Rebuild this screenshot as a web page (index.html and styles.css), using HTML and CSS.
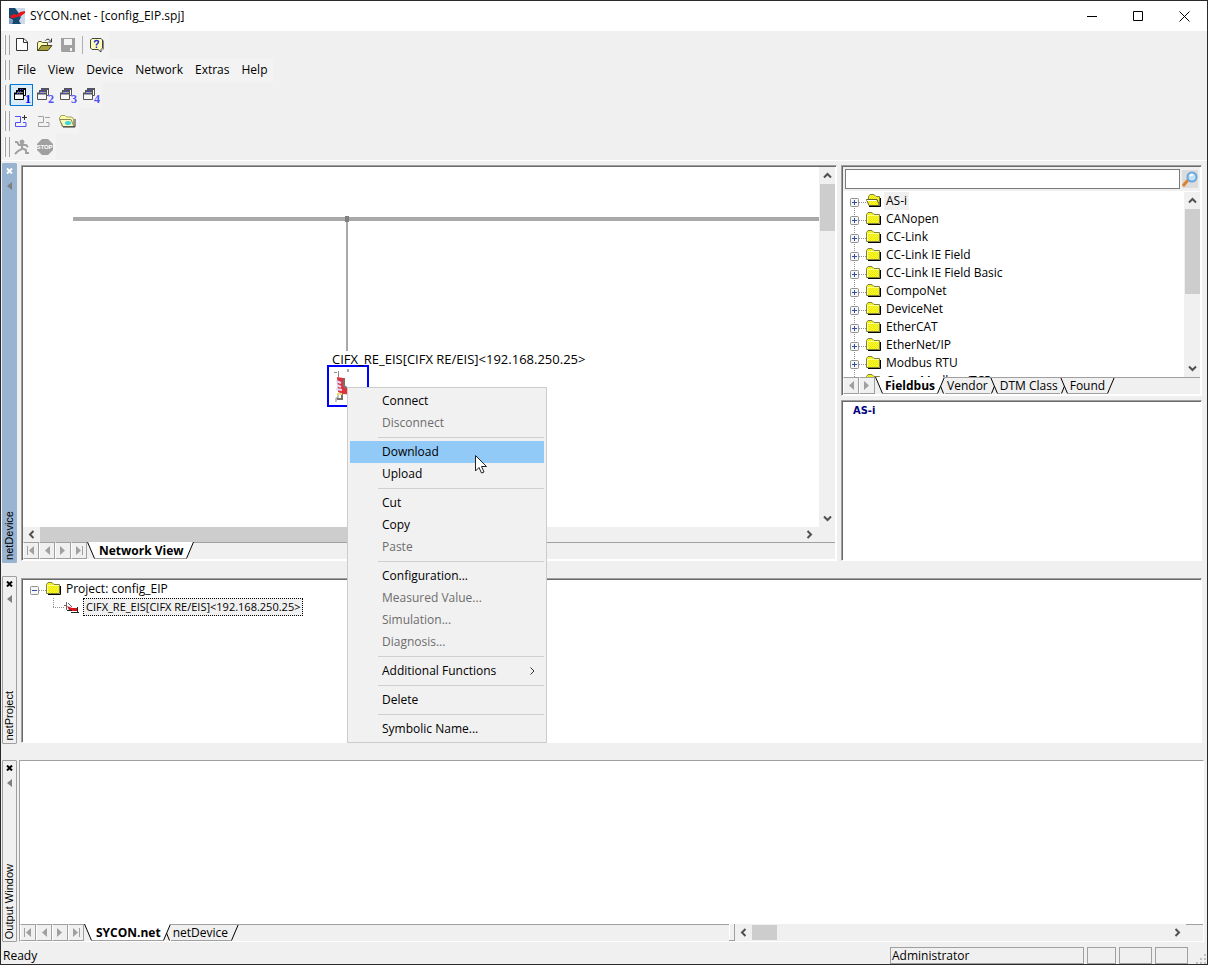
FILE: index.html
```html
<!DOCTYPE html>
<html lang="en">
<head>
<meta charset="utf-8">
<title>SYCON.net - [config_EIP.spj]</title>
<link rel="stylesheet" href="styles.css">
</head>
<body>
<svg class="defs" width="0" height="0" aria-hidden="true">
  <defs>
    <pattern id="dither" width="2" height="2" patternUnits="userSpaceOnUse">
      <rect width="2" height="2" fill="#ffff00"/><rect width="1" height="1" fill="#e6e23c"/><rect x="1" y="1" width="1" height="1" fill="#e6e23c"/>
    </pattern>
    <symbol id="folder" viewBox="0 0 16 14">
      <path d="M2 12.500h12.500V4" fill="none" stroke="#000"/>
      <path d="M.5 11.500V2.500L2 .5H6L8 2.500H13.500V11.500Z" fill="url(#dither)" stroke="#808040"/>
      <path d="M1.500 11V3.500H13" fill="none" stroke="#ffff90"/>
    </symbol>
    <symbol id="folder-open" viewBox="0 0 16 14">
      <path d="M3 12.500h11.500V4" fill="none" stroke="#000"/>
      <path d="M2.500 6V2.500L4 .5H8L10 2.500H13.500V11.500" fill="url(#dither)" stroke="#808040"/>
      <path d="M.5 5.500H11L13.500 11.500H3Z" fill="url(#dither)" stroke="#606030"/>
      <path d="M1 6.500H10" stroke="#fff"/>
    </symbol>
    <symbol id="plus" viewBox="0 0 9 9">
      <rect x=".5" y=".5" width="8" height="8" rx="1" fill="#f6f6f6" stroke="#919191"/>
      <path d="M2 4.500H7M4.500 2V7" stroke="#2f4fa8"/>
    </symbol>
    <symbol id="minus" viewBox="0 0 9 9">
      <rect x=".5" y=".5" width="8" height="8" rx="1" fill="#f6f6f6" stroke="#919191"/>
      <path d="M2 4.500H7" stroke="#2f4fa8"/>
    </symbol>
    <symbol id="first" viewBox="0 0 10 9"><path d="M1.500 0V9" stroke="#a0a0a0"/><path d="M8 0V9L3 4.500Z" fill="#a0a0a0"/></symbol>
    <symbol id="prev" viewBox="0 0 10 9"><path d="M8 0V9L3 4.500Z" fill="#a0a0a0"/></symbol>
    <symbol id="next" viewBox="0 0 10 9"><path d="M2 0V9L7 4.500Z" fill="#a0a0a0"/></symbol>
    <symbol id="last" viewBox="0 0 10 9"><path d="M8.500 0V9" stroke="#a0a0a0"/><path d="M2 0V9L7 4.500Z" fill="#a0a0a0"/></symbol>
    <symbol id="windows" viewBox="0 0 13 12">
      <path d="M4.500 1.500H11.500V7.500H4.500Z" fill="#f8f8f8" stroke="currentColor"/>
      <path d="M4 1H12" stroke="currentColor" stroke-width="2"/>
      <path d="M2.500 3.500H9.500V9.500H2.500Z" fill="#f8f8f8" stroke="currentColor"/>
      <path d="M2 3H10" stroke="currentColor" stroke-width="2"/>
      <path d="M.5 5.500H9.500V11.500H.5Z" fill="#f8f8f8" stroke="currentColor"/>
      <path d="M0 5.500H10" stroke="currentColor" stroke-width="2"/>
      <path d="M6 1.500h1M8 1.500h1M4 3.500h1M6 3.500h1M3 5.500h1M5 5.500h1" stroke="#44f"/>
    </symbol>
    <symbol id="close-x" viewBox="0 0 7 6"><path d="M1 .5L6 5.500M6 .5L1 5.500" stroke="currentColor" stroke-width="2"/></symbol>
    <symbol id="tri" viewBox="0 0 5 8"><path d="M5 0V8L0 4Z" fill="#808080"/></symbol>
    <symbol id="up" viewBox="0 0 9 7"><path d="M1 5.500L4.500 2L8 5.500" fill="none" stroke="#505050" stroke-width="2"/></symbol>
    <symbol id="down" viewBox="0 0 9 7"><path d="M1 1.500L4.500 5L8 1.500" fill="none" stroke="#505050" stroke-width="2"/></symbol>
    <symbol id="left" viewBox="0 0 7 9"><path d="M5.500 1L2 4.500L5.500 8" fill="none" stroke="#505050" stroke-width="2"/></symbol>
    <symbol id="right" viewBox="0 0 7 9"><path d="M1.500 1L5 4.500L1.500 8" fill="none" stroke="#505050" stroke-width="2"/></symbol>
    <symbol id="edge-open" viewBox="0 0 8 17"><path d="M0 0H8V16H7Z" fill="#fff"/><path d="M.5 0L7.500 16.500" stroke="#000"/></symbol>
    <symbol id="edge-close" viewBox="0 0 8 17"><path d="M0 0H8L1 16H0Z" fill="#fff"/><path d="M7.500 0L.5 16.500" stroke="#000"/></symbol>
    <symbol id="edge-close-next" viewBox="0 0 8 17"><path d="M0 0H8L1 16H0Z" fill="#fff"/><path d="M7.500 0L.5 16.500M3.500 9L6.500 16.500" stroke="#000"/><path d="M7 .5H8" stroke="#a0a0a0"/></symbol>
    <symbol id="edge-mid" viewBox="0 0 8 17"><path d="M.5 0L7.500 16.500M4.500 9L1.500 16.500" stroke="#000"/><path d="M0 .5H8" stroke="#a0a0a0"/></symbol>
    <symbol id="edge-end" viewBox="0 0 8 17"><path d="M7.500 0L.5 16.500" stroke="#000"/><path d="M0 .5H8" stroke="#a0a0a0"/></symbol>
  </defs>
</svg>

<div class="window">
  <header class="titlebar">
    <svg class="logo" width="16" height="16" viewBox="0 0 16 16">
      <rect width="16" height="16" fill="#cdd9ea"/>
      <path d="M0 0H6L9 4L12 9L10 13L12 16H3L4 12L0 10Z" fill="#17496f"/>
      <path d="M0 11L4 12L3 16H0Z" fill="#7d9cbd"/>
      <path d="M1 8L5 6L8 7L11 4L16 3V5L12 8L8 9L5 10L2 10Z" fill="#e8141c"/>
    </svg>
    <h1 class="title">SYCON.net - [config_EIP.spj]</h1>
    <div class="controls">
      <button class="control" aria-label="Minimize"><svg width="11" height="11"><path d="M0 5.500H10" stroke="#000"/></svg></button>
      <button class="control" aria-label="Maximize"><svg width="11" height="11"><path d="M.5 .5H9.500V9.500H.5Z" fill="none" stroke="#000"/></svg></button>
      <button class="control" aria-label="Close"><svg width="11" height="11"><path d="M.5 .5L10.500 10.500M10.500 .5L.5 10.500" stroke="#000"/></svg></button>
    </div>
  </header>

  <div class="bars">
    <div class="bar"><div class="band">
      <span class="grip"></span>
      <button class="tool" aria-label="New"><svg width="12" height="14"><path d="M.5 .5H8L11.500 4V12.500H.5Z" fill="#fff" stroke="#333"/><path d="M7.500 .5V4.500H11" fill="none" stroke="#333"/></svg></button>
      <button class="tool" aria-label="Open"><svg width="16" height="14"><path d="M.5 13V4.500L2 3.500H4L5.500 4.500H10.500V7" fill="#ffffb0" stroke="#55553a"/><path d="M1 12.500L4.500 7.500H15L11 12.500Z" fill="#a8a03c" stroke="#44441f"/><path d="M8.500 2.500Q11 -.5 13.500 3M14.500 .5V4H11.500" fill="none" stroke="#333"/></svg></button>
      <button class="tool" aria-label="Save" disabled><svg width="14" height="14"><path d="M0 0H14V14H1L0 13Z" fill="#a0a0a0"/><path d="M3 1H11V7H3ZM9 10H11V13H9Z" fill="#f4f4f4"/></svg></button>
      <span class="divider"></span>
      <button class="tool" aria-label="Help"><svg width="15" height="15"><path d="M2 .5H11L12.500 2V10L11 11.500V14L8 11.500H2L.5 10V2Z" fill="#ffffb8" stroke="#444"/><path d="M13.500 2.500V11L12 12.500" fill="none" stroke="#888"/><path d="M4.500 4.500Q4.500 2.500 6.500 2.500Q8.500 2.500 8.500 4Q8.500 5 6.500 6.500V7.500M6.500 8.500V10" fill="none" stroke="#3434d0" stroke-width="1.500"/></svg></button>
    </div></div>
    <div class="bar menu-bar"><nav class="band">
      <span class="grip menu-grip"></span>
      <button class="menu">File</button><button class="menu">View</button><button class="menu">Device</button><button class="menu">Network</button><button class="menu">Extras</button><button class="menu">Help</button>
    </nav></div>
    <div class="bar"><div class="band">
      <span class="grip"></span>
      <button class="tool numbered selected" aria-label="Layout 1"><svg width="13" height="12"><use href="#windows"/></svg><span class="num">1</span></button>
      <button class="tool numbered" aria-label="Layout 2"><svg width="13" height="12"><use href="#windows"/></svg><span class="num">2</span></button>
      <button class="tool numbered" aria-label="Layout 3"><svg width="13" height="12"><use href="#windows"/></svg><span class="num">3</span></button>
      <button class="tool numbered" aria-label="Layout 4"><svg width="13" height="12"><use href="#windows"/></svg><span class="num">4</span></button>
    </div></div>
    <div class="bar"><div class="band">
      <span class="grip"></span>
      <button class="tool" aria-label="Add"><svg width="13" height="13"><path d="M0 1.500H5.500V7.500H.5V11.500H11V7.500H8" fill="none" stroke="#5050ff"/><path d="M7 2.500H12M9.500 0V5" stroke="#333"/></svg></button>
      <button class="tool" aria-label="Remove" disabled><svg width="13" height="13"><path d="M0 1.500H5.500V7.500H.5V11.500H11V7.500H8M7 2.500H12" fill="none" stroke="#a0a0a0"/></svg></button>
      <button class="tool" aria-label="Catalog"><svg width="17" height="14"><path d="M.5 4L2 1.500H6L7.500 3H13L14.500 5V12.500H3Z" fill="#ffffa0" stroke="#a0a070"/><path d="M.5 5.500H12L15 12.500H4Z" fill="#f8f8b8" stroke="#888860"/><ellipse cx="9" cy="9" rx="3" ry="2" fill="#38d8d8"/><path d="M4 13H16V5" fill="none" stroke="#333"/></svg></button>
    </div></div>
    <div class="bar"><div class="band">
      <span class="grip"></span>
      <button class="tool" aria-label="Run" disabled><svg width="16" height="16"><circle cx="8" cy="3" r="2" fill="#a0a0a0" stroke="#a0a0a0"/><path d="M1 3H3L5 6H12L14 8M8 5V10L4 12L1 15M8 9L12 11V14H15" fill="none" stroke="#a0a0a0" stroke-width="2"/></svg></button>
      <button class="tool stop" aria-label="Stop" disabled><svg width="16" height="16"><path d="M5 0H11L16 5V11L11 16H5L0 11V5Z" fill="#a0a0a0"/></svg><span class="stop-text">STOP</span></button>
    </div></div>
  </div>

  <main class="work">
    <section class="row row-device">
      <div class="dock active"><button class="dock-btn" aria-label="Close netDevice"><svg width="7" height="6"><use href="#close-x"/></svg></button><button class="dock-btn" aria-label="Collapse netDevice"><svg width="5" height="8"><use href="#tri"/></svg></button><span class="dock-label">netDevice</span></div>
      <div class="panel network">
        <div class="view">
          <div class="canvas">
            <div class="bus"></div><div class="drop"></div><div class="joint"></div>
            <div class="node"><svg width="34" height="34"><path d="M3 3.500H6M7.500 2V8M7 24V29H5V33" fill="none" stroke="#888"/><path d="M17 0V3" stroke="#a9a9a9" stroke-width="2"/><path d="M6 8L12 9V15L14 19L24 18V26L12 25L7 23Z" fill="#e0323c"/><path d="M13 9V17L16 19M11 24V30H6" fill="none" stroke="#77706c" stroke-width="2"/><path d="M5 12L10 14M6 16L10 18M5 20L11 21" stroke="#dcdcff" stroke-width="2"/><path d="M6 25H11" stroke="#eedc70" stroke-width="2"/></svg></div>
            <div class="node-label">CIFX_RE_EIS[CIFX RE/EIS]&lt;192.168.250.25&gt;</div>
          </div>
          <div class="vscroll"><svg width="9" height="7"><use href="#up"/></svg><span class="thumb short"></span><svg class="end" width="9" height="7"><use href="#down"/></svg></div>
        </div>
        <div class="hscroll"><svg width="7" height="9"><use href="#left"/></svg><span class="thumb long"></span><svg class="end" width="7" height="9"><use href="#right"/></svg></div>
        <div class="tabs">
          <button class="nav" aria-label="First"><svg width="10" height="9"><use href="#first"/></svg></button><button class="nav" aria-label="Previous"><svg width="10" height="9"><use href="#prev"/></svg></button><button class="nav" aria-label="Next"><svg width="10" height="9"><use href="#next"/></svg></button><button class="nav" aria-label="Last"><svg width="10" height="9"><use href="#last"/></svg></button>
          <svg width="8" height="17"><use href="#edge-open"/></svg><button class="tab on">Network View</button><svg width="8" height="17"><use href="#edge-close"/></svg><span class="fill"></span>
        </div>
      </div>
      <aside class="side">
        <div class="panel catalog">
          <form class="search"><input class="search-box" type="text" aria-label="Search"><button class="search-btn" type="button" aria-label="Find"><svg width="16" height="16"><path d="M1 15L6 9" stroke="#d98333" stroke-width="3"/><circle cx="10" cy="6" r="4.500" fill="#bfe4fa" stroke="#6ca4dc" stroke-width="2"/><path d="M8 5Q9 3 11 4" fill="none" stroke="#fff" stroke-width="2"/></svg></button></form>
          <div class="listing">
            <ul class="tree">
              <li class="item"><svg width="9" height="9"><use href="#plus"/></svg><svg class="fold" width="16" height="14"><use href="#folder-open"/></svg><span class="name picked">AS-i</span></li>
              <li class="item"><svg width="9" height="9"><use href="#plus"/></svg><svg class="fold" width="16" height="14"><use href="#folder"/></svg><span class="name">CANopen</span></li>
              <li class="item"><svg width="9" height="9"><use href="#plus"/></svg><svg class="fold" width="16" height="14"><use href="#folder"/></svg><span class="name">CC-Link</span></li>
              <li class="item"><svg width="9" height="9"><use href="#plus"/></svg><svg class="fold" width="16" height="14"><use href="#folder"/></svg><span class="name">CC-Link IE Field</span></li>
              <li class="item"><svg width="9" height="9"><use href="#plus"/></svg><svg class="fold" width="16" height="14"><use href="#folder"/></svg><span class="name">CC-Link IE Field Basic</span></li>
              <li class="item"><svg width="9" height="9"><use href="#plus"/></svg><svg class="fold" width="16" height="14"><use href="#folder"/></svg><span class="name">CompoNet</span></li>
              <li class="item"><svg width="9" height="9"><use href="#plus"/></svg><svg class="fold" width="16" height="14"><use href="#folder"/></svg><span class="name">DeviceNet</span></li>
              <li class="item"><svg width="9" height="9"><use href="#plus"/></svg><svg class="fold" width="16" height="14"><use href="#folder"/></svg><span class="name">EtherCAT</span></li>
              <li class="item"><svg width="9" height="9"><use href="#plus"/></svg><svg class="fold" width="16" height="14"><use href="#folder"/></svg><span class="name">EtherNet/IP</span></li>
              <li class="item"><svg width="9" height="9"><use href="#plus"/></svg><svg class="fold" width="16" height="14"><use href="#folder"/></svg><span class="name">Modbus RTU</span></li>
              <li class="item"><svg width="9" height="9"><use href="#plus"/></svg><svg class="fold" width="16" height="14"><use href="#folder"/></svg><span class="name">Open Modbus/TCP</span></li>
            </ul>
            <div class="vscroll"><svg width="9" height="7"><use href="#up"/></svg><span class="thumb tall"></span><svg class="end" width="9" height="7"><use href="#down"/></svg></div>
          </div>
          <div class="tabs snug">
            <button class="nav" aria-label="Previous"><svg width="10" height="9"><use href="#prev"/></svg></button><button class="nav" aria-label="Next"><svg width="10" height="9"><use href="#next"/></svg></button>
            <svg width="8" height="17"><use href="#edge-open"/></svg><button class="tab on">Fieldbus</button><svg width="8" height="17"><use href="#edge-close-next"/></svg><button class="tab">Vendor</button><svg width="8" height="17"><use href="#edge-mid"/></svg><button class="tab">DTM Class</button><svg width="8" height="17"><use href="#edge-mid"/></svg><button class="tab">Found</button><svg width="8" height="17"><use href="#edge-end"/></svg><span class="fill"></span>
          </div>
        </div>
        <div class="panel info"><h2 class="info-title">AS-i</h2></div>
      </aside>
    </section>

    <section class="row row-project">
      <div class="dock"><button class="dock-btn" aria-label="Close netProject"><svg width="7" height="6"><use href="#close-x"/></svg></button><button class="dock-btn" aria-label="Collapse netProject"><svg width="5" height="8"><use href="#tri"/></svg></button><span class="dock-label">netProject</span></div>
      <div class="panel project">
        <ul class="project-tree">
          <li class="item root"><svg width="9" height="9"><use href="#minus"/></svg><svg class="fold" width="16" height="14"><use href="#folder"/></svg><span class="name">Project: config_EIP</span></li>
          <li class="item child"><svg width="16" height="14"><path d="M0 4.500H3M2.500 1V9M4 2L8 6" fill="none" stroke="#666"/><path d="M3 5L8 7L13 7L14 10H9L5 9Z" fill="#d8141c"/><path d="M3 9.500H8M7 11.500H15M13.500 6V12" stroke="#222"/></svg><span class="name focus">CIFX_RE_EIS[CIFX RE/EIS]&lt;192.168.250.25&gt;</span></li>
        </ul>
      </div>
    </section>

    <section class="row row-output">
      <div class="dock"><button class="dock-btn" aria-label="Close Output Window"><svg width="7" height="6"><use href="#close-x"/></svg></button><button class="dock-btn" aria-label="Collapse Output Window"><svg width="5" height="8"><use href="#tri"/></svg></button><span class="dock-label">Output Window</span></div>
      <div class="output">
        <div class="log"></div>
        <div class="output-foot">
          <div class="tabs">
            <button class="nav" aria-label="First"><svg width="10" height="9"><use href="#first"/></svg></button><button class="nav" aria-label="Previous"><svg width="10" height="9"><use href="#prev"/></svg></button><button class="nav" aria-label="Next"><svg width="10" height="9"><use href="#next"/></svg></button><button class="nav" aria-label="Last"><svg width="10" height="9"><use href="#last"/></svg></button>
            <svg width="8" height="17"><use href="#edge-open"/></svg><button class="tab on">SYCON.net</button><svg width="8" height="17"><use href="#edge-close-next"/></svg><button class="tab">netDevice</button><svg width="8" height="17"><use href="#edge-end"/></svg><span class="fill"></span>
          </div>
          <span class="splitter"></span>
          <div class="hscroll"><svg width="7" height="9"><use href="#left"/></svg><span class="thumb small"></span><svg class="end" width="7" height="9"><use href="#right"/></svg></div>
          <span class="corner"></span>
        </div>
      </div>
    </section>
  </main>

  <footer class="status">
    <span class="ready">Ready</span>
    <span class="pane user">Administrator</span><span class="pane p1"></span><span class="pane p2"></span><span class="pane p2"></span>
    <svg class="size-grip" width="10" height="10"><path d="M8 0h2v2H8zM4 4h2v2H4zM8 4h2v2H8zM0 8h2v2H0zM4 8h2v2H4zM8 8h2v2H8z" fill="#bfbfbf"/></svg>
  </footer>

  <div class="context" role="menu">
    <button class="entry" role="menuitem">Connect</button>
    <button class="entry" role="menuitem" disabled>Disconnect</button>
    <hr class="rule">
    <button class="entry hot" role="menuitem">Download</button>
    <button class="entry" role="menuitem">Upload</button>
    <hr class="rule">
    <button class="entry" role="menuitem">Cut</button>
    <button class="entry" role="menuitem">Copy</button>
    <button class="entry" role="menuitem" disabled>Paste</button>
    <hr class="rule">
    <button class="entry" role="menuitem">Configuration...</button>
    <button class="entry" role="menuitem" disabled>Measured Value...</button>
    <button class="entry" role="menuitem" disabled>Simulation...</button>
    <button class="entry" role="menuitem" disabled>Diagnosis...</button>
    <hr class="rule">
    <button class="entry" role="menuitem">Additional Functions<svg width="5" height="8"><path d="M.5 .5L4 4L.5 7.500" fill="none" stroke="#333"/></svg></button>
    <hr class="rule">
    <button class="entry" role="menuitem">Delete</button>
    <hr class="rule">
    <button class="entry" role="menuitem">Symbolic Name...</button>
  </div>
  <svg class="pointer" width="12" height="19"><path d="M.5 .5V16L4 12.500L6.500 18L9 17L6.500 11.500H11.500Z" fill="#fff" stroke="#222"/></svg>
</div>
</body>
</html>
```
FILE: styles.css
```css
* { box-sizing: border-box; }
body { margin: 0; font: 12px/18px "Open Sans", "Noto Sans", sans-serif; color: #000; }
button, input { font: inherit; color: inherit; margin: 0; padding: 0; border: 0; background: none; }
svg { display: block; flex: none; }
ul { list-style: none; margin: 0; padding: 0; }
.defs { position: absolute; }

.window { position: relative; display: flex; flex-direction: column; height: 100vh; background: #f0f0f0; border: 1px solid #2b292b; overflow: hidden; }

.titlebar { display: flex; align-items: center; height: 30px; flex: none; background: #fff; padding-left: 8px; }
.title { margin: 0; padding-left: 5px; font: inherit; }
.controls { display: flex; margin-left: auto; }
.control { width: 46px; height: 30px; display: flex; align-items: center; justify-content: center; }

.bars { flex: none; padding: 1px 0 0 4px; border-bottom: 1px solid #fff; }
.bar { display: flex; height: 26px; }
.menu-bar { height: 24px; }
.band { display: flex; align-items: center; background: #f3f3f3; }
.grip { width: 5px; height: 20px; border: solid #a0a0a0; border-width: 0 1px; box-shadow: -1px 0 #fff; }
.menu-grip { margin-right: 1px; }
.tool { width: 23px; height: 22px; display: flex; align-items: center; justify-content: center; position: relative; }
.divider { width: 1px; height: 18px; background: #b0b0b0; margin: 0 3px; }
.menu { padding: 0 6px; height: 22px; }
.numbered { color: #555; align-items: flex-start; justify-content: flex-start; padding: 4px 0 0 4px; }
.selected { color: #000; border: 1px solid #0078d7; background: #dcebf8; padding: 3px 0 0 3px; }
.num { position: absolute; right: 2px; bottom: 1px; font: bold 12px/11px "Liberation Serif", serif; color: #5050ff; }
.selected .num { right: 1px; bottom: 0; color: #00f; }
.stop-text { position: absolute; inset: 0; font: bold 6px/22px "Liberation Sans", sans-serif; color: #fff; text-align: center; }

.work { flex: 1; min-height: 0; display: flex; flex-direction: column; gap: 13px; padding: 2px 0 3px 1px; }
.row { display: flex; min-height: 0; }
.row-device { flex: 400 1 0; }
.row-project { flex: 168 1 0; }
.row-output { flex: 182 1 0; margin-top: 3px; }

.dock { width: 15px; flex: none; display: flex; flex-direction: column; align-items: center; padding: 4px 0 2px; border: 1px solid #a0a0a0; border-radius: 1px; }
.dock.active { background: #99b4d1; border-color: #99b4d1; }
.dock.active .dock-btn { color: #fff; }
.dock-btn { height: 14px; width: 13px; display: flex; justify-content: center; align-items: flex-start; flex: none; }
.dock-label { margin-top: auto; writing-mode: vertical-rl; transform: rotate(180deg); font: 11px/13px "Liberation Sans", Arial, sans-serif; white-space: nowrap; }

.panel { display: flex; flex-direction: column; min-height: 0; background: #fff; border: 1px solid; border-color: #a0a0a0 #fff #fff #a0a0a0; box-shadow: inset 1px 1px #696969; padding: 1px; }
.network { flex: 1; min-width: 0; margin: 2px 4px 2px; }
.view { flex: 1; min-height: 0; display: flex; }
.canvas { position: relative; flex: 1; min-width: 0; overflow: hidden; }
.bus { position: absolute; left: 50px; right: 0; top: 50px; height: 4px; background: #a9a9a9; }
.drop { position: absolute; left: 323px; top: 54px; width: 2px; height: 130px; background: #a9a9a9; }
.joint { position: absolute; left: 322px; top: 49px; width: 4px; height: 6px; background: #808080; }
.node { position: absolute; left: 304px; top: 198px; width: 42px; height: 42px; padding: 2px; border: 2px solid #00f; background: #fff; }
.node-label { position: absolute; left: 309px; top: 183px; font-size: 13px; white-space: nowrap; }

.vscroll { width: 16px; flex: none; display: flex; flex-direction: column; align-items: center; background: #f0f0f0; padding: 5px 0; }
.hscroll { height: 15px; flex: none; display: flex; align-items: center; background: #f0f0f0; padding: 0 22px 0 5px; }
.thumb { background: #cdcdcd; flex: none; }
.vscroll .thumb { width: 15px; margin-top: 5px; }
.hscroll .thumb { height: 15px; margin-left: 5px; }
.short { height: 47px; }
.tall { height: 85px; }
.long { width: 46%; }
.small { width: 25px; }
.end { margin: auto 0 0; }
.hscroll .end { margin: 0 0 0 auto; }

.tabs { display: flex; flex: none; height: 17px; background: #f0f0f0; }
.nav { width: 16px; height: 17px; border: 1px solid #a0a0a0; border-left-color: #fff; display: flex; align-items: center; justify-content: center; }
.tab { padding: 0 3px 0 2px; line-height: 15px; border-top: 1px solid #a0a0a0; border-bottom: 1px solid #a0a0a0; white-space: nowrap; }
.tab.on { background: #fff; font-weight: bold; border-top-color: #fff; padding: 0 2px 0 4px; }
.snug .tab { padding: 0 2px; }
.fill { flex: 1; border-top: 1px solid #a0a0a0; }

.side { width: 361px; flex: none; display: flex; flex-direction: column; gap: 4px; margin: 2px 5px 2px 0; }
.catalog { flex: 232 1 0; }
.info { flex: 160 1 0; }
.search { display: flex; flex: none; gap: 2px; padding: 2px 2px 2px; background: #f0f0f0; }
.search-box { flex: 1; min-width: 0; height: 20px; background: #fff; border: 1px solid #7a7a7a; }
.search-btn { width: 16px; height: 18px; background: #dcdcdc; align-self: center; }
.listing { flex: 1; min-height: 0; display: flex; margin-top: 1px; }
.tree { flex: 1; min-width: 0; overflow: hidden; background: repeating-linear-gradient(#909090 0 1px, transparent 1px 2px) 11px 10px / 1px 100% no-repeat; }
.item { display: flex; align-items: center; height: 18px; padding-left: 7px; }
.fold { margin-left: 7px; }
.item svg:first-child { margin-top: 2px; }
.name { margin-left: 2px; padding: 0 2px; line-height: 18px; white-space: nowrap; }
.picked { background: #f0f0f0; }
.tree .item, .root { background: repeating-linear-gradient(90deg, #909090 0 1px, transparent 1px 2px) 16px 10px / 7px 1px no-repeat; }
.info-title { margin: 0; padding: 1px 10px; font: bold 11px/16px "DejaVu Sans Condensed", "DejaVu Sans", sans-serif; color: #000080; }

.project { flex: 1; min-width: 0; margin: 2px 5px 1px 4px; }
.child { padding-left: 41px; background: repeating-linear-gradient(90deg, #909090 0 1px, transparent 1px 2px) 30px 9px / 11px 1px no-repeat, repeating-linear-gradient(#909090 0 1px, transparent 1px 2px) 30px 0 / 1px 9px no-repeat; }
.focus { border: 1px dotted #000; background: #f0f0f0; padding: 0 2px; font-size: 11px; line-height: 16px; margin-left: 3px; }

.output { flex: 1; min-width: 0; display: flex; flex-direction: column; margin: 0 3px 0 2px; border: 1px solid; border-color: #a0a0a0 #fff #fff #a0a0a0; }
.log { flex: 1; background: #fff; }
.output-foot { display: flex; flex: none; height: 17px; }
.output-foot .tabs { flex: 710 1 0; }
.output-foot .hscroll { flex: 441 1 0; height: 17px; padding: 0 5px; }
.splitter { width: 6px; border: solid #a0a0a0; border-width: 0 1px 1px 0; box-shadow: inset 1px 0 #fff; }
.corner { width: 17px; border-top: 1px solid #a0a0a0; }

.status { display: flex; align-items: center; gap: 3px; height: 19px; flex: none; padding: 2px 1px 0 2px; }
.ready { flex: 1; }
.pane { height: 17px; border: 1px solid #a0a0a0; padding-left: 1px; line-height: 16px; }
.user { width: 194px; }
.p1 { width: 29px; }
.p2 { width: 33px; }
.size-grip { margin-left: 5px; align-self: flex-end; }

.context { position: absolute; left: 346px; top: 386px; width: 200px; padding: 2px; background: #f1f1f1; border: 1px solid #ccc; display: flex; flex-direction: column; }
.entry { display: flex; align-items: center; justify-content: space-between; height: 22px; padding: 0 9px 0 32px; text-align: left; white-space: nowrap; }
.entry:disabled { color: #6d6d6d; }
.hot { background: #91c9f7; }
.rule { height: 1px; margin: 3px 0 3px 28px; border: 0; background: #d0d0d0; }
.pointer { position: absolute; left: 474px; top: 454px; }
```
